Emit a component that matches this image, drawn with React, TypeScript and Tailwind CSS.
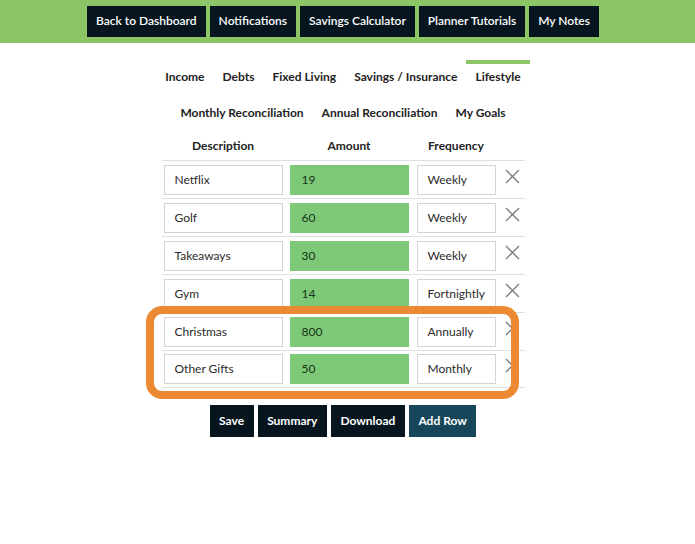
import React from "react";

interface IExpenseRow {
    description: string
    amount: string
    frequency: string
}

const navItems: string[] = ["Back to Dashboard", "Notifications", "Savings Calculator", "Planner Tutorials", "My Notes"];

const tabRowOne: string[] = ["Income", "Debts", "Fixed Living", "Savings / Insurance", "Lifestyle"];
const tabRowTwo: string[] = ["Monthly Reconciliation", "Annual Reconciliation", "My Goals"];

const rows: IExpenseRow[] = [
    { description: "Netflix", amount: "19", frequency: "Weekly" },
    { description: "Golf", amount: "60", frequency: "Weekly" },
    { description: "Takeaways", amount: "30", frequency: "Weekly" },
    { description: "Gym", amount: "14", frequency: "Fortnightly" },
    { description: "Christmas", amount: "800", frequency: "Annually" },
    { description: "Other Gifts", amount: "50", frequency: "Monthly" },
];

const darkButton: string = "h-[32px] px-[9.5px] flex items-center bg-[#07161e] text-white text-[12px] leading-[16px] font-bold";
const cellClass: string = "h-[30px] flex items-center px-[10px] border border-[#d4d4d4] bg-white text-[12px] leading-[16px] text-[#2b2b2b]";

const RemoveIcon = () =>
{
    return (
        <svg width="15" height="15" viewBox="0 0 15 15" className="mb-[7px]">
            <path d="M1 1 L14 14 M14 1 L1 14" stroke="#7d7d7d" strokeWidth="1.4" fill="none" />
        </svg>
    )
}

const Tab = ({label, active}: {label: string, active?: boolean}) =>
{
    return (
        <div className={"h-[36px] px-[9px] pt-[5px] border-t-4 text-[12px] leading-[16px] font-bold text-[#222] " + (active ? "border-[#8cc56a]" : "border-transparent")}>
            {label}
        </div>
    )
}

export default function App()
{
    return (
        <div className="relative min-h-[544px] bg-white font-['Lato','Noto_Sans',sans-serif]">
            {/* top navigation */}
            <div className="h-[43px] bg-[#8cc566] flex justify-center gap-[4px] pt-[6px] pr-[9px]">
                {navItems.map((item) =>
                    <div key={item} className="h-[31px] px-[9px] pb-[1px] flex items-center bg-[#07161e] text-white text-[12px] leading-[16px] font-semibold">
                        {item}
                    </div>
                )}
            </div>

            <div className="flex flex-col items-center pr-[9px]">
                <div className="flex mt-[17px]">
                    {tabRowOne.map((t) => <Tab key={t} label={t} active={t === "Lifestyle"} />)}
                </div>
                <div className="flex">
                    {tabRowTwo.map((t) => <Tab key={t} label={t} />)}
                </div>

                {/* lifestyle table */}
                <div className="w-[363px]">
                    <div className="h-[28px] flex items-center text-[12px] leading-[16px] font-bold text-[#222]">
                        <div className="w-[119px] ml-[2px] text-center">Description</div>
                        <div className="w-[119px] ml-[7px] text-center">Amount</div>
                        <div className="w-[79px] ml-[8px] text-center">Frequency</div>
                    </div>
                    {rows.map((row) =>
                        <div key={row.description} className="h-[38px] flex items-center border-t border-[#e0e0e0] last:border-b pl-[2px]">
                            <div className={cellClass + " w-[119px]"}>{row.description}</div>
                            <div className="w-[119px] ml-[7px] h-[30px] flex items-center px-[12px] bg-[#7dc977] text-[12px] leading-[16px] text-[#173417]">{row.amount}</div>
                            <div className={cellClass + " w-[79px] ml-[8px]"}>{row.frequency}</div>
                            <div className="ml-[9px]"><RemoveIcon /></div>
                        </div>
                    )}
                </div>

                <div className="flex gap-[4px] mt-[17px]">
                    <div className={darkButton}>Save</div>
                    <div className={darkButton}>Summary</div>
                    <div className={darkButton}>Download</div>
                    <div className="h-[32px] px-[9.5px] flex items-center bg-[#17465a] text-white text-[12px] leading-[16px] font-bold">Add Row</div>
                </div>
            </div>

            {/* highlight annotation over the last two rows */}
            <div className="absolute left-[146px] top-[306px] w-[373px] h-[93px] border-[8px] border-[#ec8a34] rounded-[16px] pointer-events-none" />
        </div>
    )
}
